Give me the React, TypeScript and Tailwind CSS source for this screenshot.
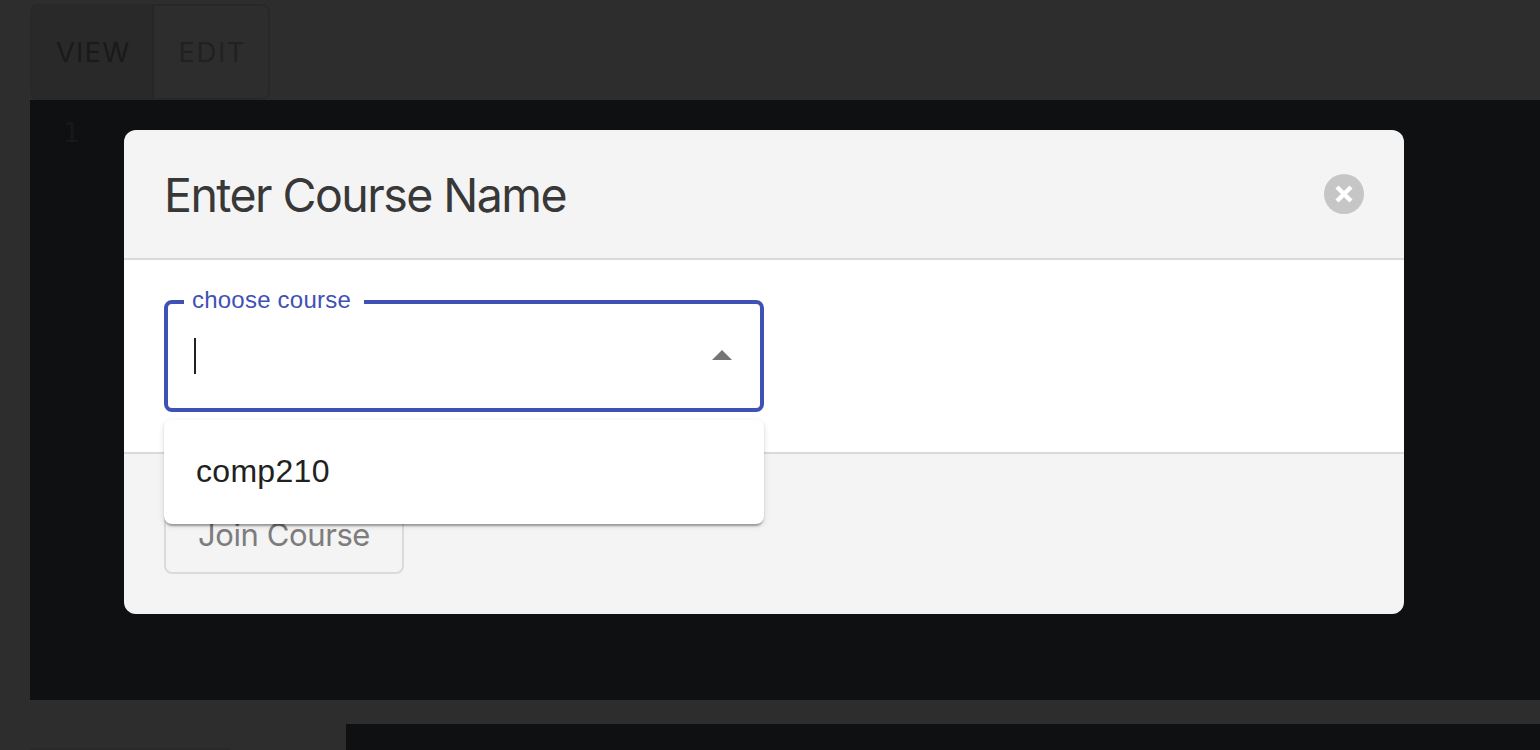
import React from 'react';

function ViewToggle() {
  return (
    <div className="flex h-24 w-60 overflow-hidden rounded-lg border-2 border-[#282828] font-['Inter',sans-serif] text-[27.5px] leading-[92px]">
      <div className="w-[122px] border-r-2 border-[#262626] bg-[#292929] pl-6 tracking-[1.1px] text-[#1a1a1a]">VIEW</div>
      <div className="flex-1 pl-[24.5px] tracking-[1.5px] text-[#212121]">EDIT</div>
    </div>
  );
}

function CourseSelect() {
  return (
    <div className="relative w-[600px]">
      <fieldset className="flex h-28 rounded-lg border-4 border-[#3f51b5]">
        <div className="flex flex-1 items-center justify-between pl-[26px] pr-7">
          <span className="h-9 w-0.5 bg-[#212121]" />
          <svg className="mb-0.5 h-[10px] w-5" viewBox="0 0 20 10" fill="#757575">
            <path d="M0 10 10 0l10 10z" />
          </svg>
        </div>
      </fieldset>
      <span className="absolute -top-[14px] left-5 w-[180px] whitespace-nowrap bg-white pl-2 font-['Liberation_Sans',Arial,sans-serif] text-2xl leading-7 tracking-[0.22px] text-[#3f51b5]">
        choose course
      </span>
      <ul className="absolute left-0 top-[120px] z-10 w-full rounded-lg bg-white py-4 shadow-[0_4px_2px_-2px_rgba(0,0,0,0.2),0_2px_2px_0_rgba(0,0,0,0.14),0_2px_6px_0_rgba(0,0,0,0.12)]">
        <li className="flex h-[72px] items-center px-8 pb-[3px] font-['Liberation_Sans',Arial,sans-serif] text-[32px] leading-[48px] tracking-[0.3px] text-[#212121]">
          comp210
        </li>
      </ul>
    </div>
  );
}

function CourseDialog() {
  return (
    <section className="w-[1280px] rounded-xl bg-[#f4f4f4] font-['Inter',sans-serif]">
      <header className="flex h-[130px] items-center justify-between border-b-2 border-[#dadada] px-10">
        <h2 className="whitespace-nowrap pt-0.5 text-[46.5px] leading-[60px] tracking-[-1.55px] text-[#383838]">Enter Course Name</h2>
        <button className="flex h-10 w-10 items-center justify-center rounded-full bg-[#c6c6c6]" aria-label="Close">
          <svg className="h-[18px] w-[18px]" viewBox="0 0 18 18" fill="none" stroke="#fff" strokeWidth="4.4">
            <path d="m2 2 14 14M16 2 2 16" />
          </svg>
        </button>
      </header>
      <div className="h-[194px] border-b-2 border-[#dadada] bg-white px-10 pt-10">
        <CourseSelect />
      </div>
      <footer className="h-40 px-10 pt-10">
        <button className="flex h-20 w-60 items-center justify-center whitespace-nowrap rounded-lg border-2 border-[#dadada] pt-[3px] text-[31px] tracking-[-0.4px] text-[#7d7d7d]">
          Join Course
        </button>
      </footer>
    </section>
  );
}

export default function App() {
  return (
    <main className="flex h-[750px] w-[1540px] flex-col overflow-hidden bg-[#2d2d2d] pl-[30px] pt-1">
      <ViewToggle />
      <div className="flex h-[600px] shrink-0 items-start bg-[#0f1012] pt-[30px]">
        <span className="-mt-[14px] w-[94px] pl-[33px] font-['DejaVu_Sans_Mono',monospace] text-[27px] leading-[34px] text-[#17181a]">1</span>
        <CourseDialog />
      </div>
      <div className="mt-6 flex h-[26px] items-end">
        <div className="h-[2px] w-[200px] rounded-t-lg bg-[#292929]" />
        <div className="ml-[116px] h-full flex-1 bg-[#0f1012]" />
      </div>
    </main>
  );
}
